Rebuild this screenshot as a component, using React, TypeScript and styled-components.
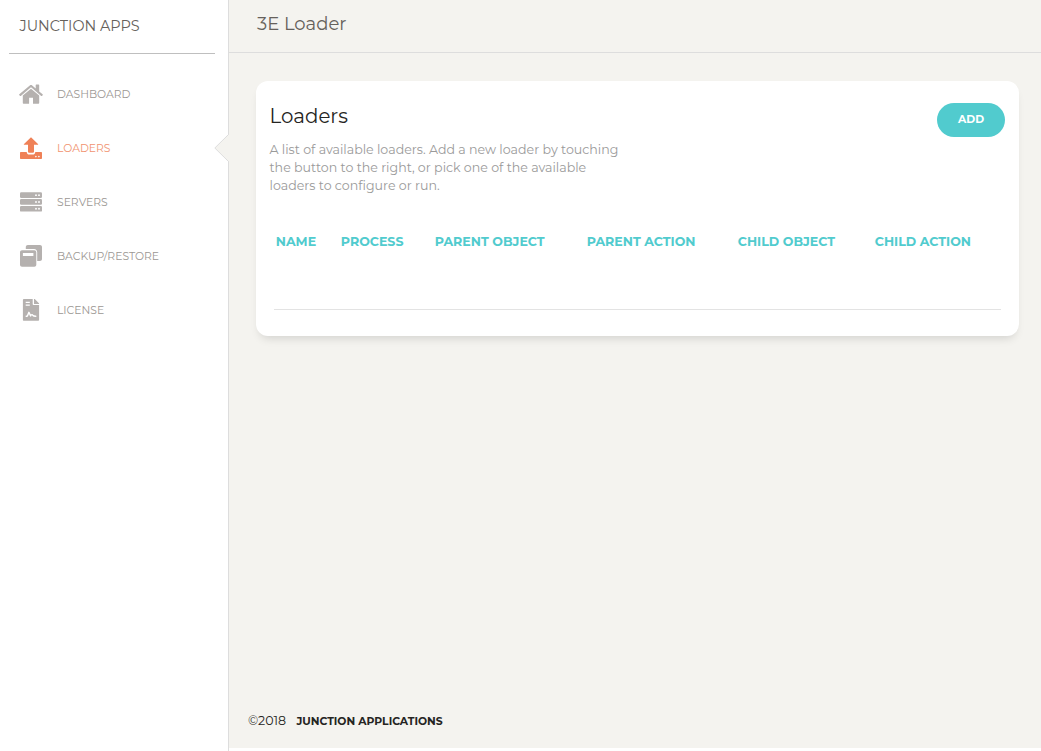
import React from "react";
import styled, { createGlobalStyle } from "styled-components";

const GlobalStyle = createGlobalStyle`
  *, *::before, *::after { box-sizing: border-box; }
  html, body { margin: 0; padding: 0; background: #fff; }
  body { font-family: Montserrat, Inter, "Open Sans", sans-serif; overflow: hidden; }
  h1, h2, p { margin: 0; font-weight: 400; }
`;

const Shell = styled.div`
  display: flex;
  height: 751px;
  width: 100%;
`;

const Sidebar = styled.aside`
  width: 229px;
  flex: none;
  background: #fff;
  border-right: 1px solid #dddddd;
`;

const Brand = styled.div`
  margin: 0 13px 0 9px;
  height: 54px;
  padding: 16px 0 0 10.5px;
  border-bottom: 1px solid #bfbfbf;
  color: #66615b;
  font-size: 14.4px;
  font-weight: 400;
  line-height: 20px;
  white-space: nowrap;
`;

const Nav = styled.nav`
  padding-top: 13px;
`;

const NavItem = styled.a<{ $active?: boolean }>`
  position: relative;
  display: flex;
  align-items: center;
  height: 54px;
  padding-left: 19px;
  color: ${(p) => (p.$active ? "#ef8157" : "#b5b1af")};
  svg { flex: none; display: block; }
`;

const NavLabel = styled.span<{ $active?: boolean }>`
  margin-left: 14px;
  padding-top: 1px;
  color: ${(p) => (p.$active ? "#f19370" : "#9b9793")};
  font-size: 10.8px;
  font-weight: 400;
  line-height: 30px;
`;

const Pointer = styled.svg`
  position: absolute;
  top: 13px;
  right: -1px;
`;

const Main = styled.main`
  flex: 1;
  height: 748px;
  display: flex;
  flex-direction: column;
  background: #f4f3ef;
`;

const TopBar = styled.header`
  height: 53px;
  padding: 9px 0 0 28px;
  border-bottom: 1px solid #dddddd;
`;

const PageTitle = styled.h1`
  color: #66615b;
  font-size: 18px;
  line-height: 30px;
`;

const Card = styled.section`
  margin: 28px 22px 0 27px;
  height: 255px;
  padding: 22px 14px 0 13.5px;
  background: #fff;
  border-radius: 12px;
  box-shadow: 0 6px 10px -4px rgba(0, 0, 0, 0.15);
`;

const CardHead = styled.div`
  display: flex;
  justify-content: space-between;
  align-items: flex-start;
  height: 123px;
`;

const CardTitle = styled.h2`
  color: #252422;
  font-size: 19.8px;
  line-height: 27px;
`;

const Summary = styled.p`
  margin-top: 11px;
  color: #9a9a9a;
  font-size: 12.6px;
  line-height: 18px;
`;

const SummaryLine = styled.span`
  display: block;
  white-space: nowrap;
`;

const AddButton = styled.button`
  width: 68px;
  height: 34px;
  padding: 0 0 1px;
  border: 0;
  border-radius: 17px;
  background: #51cbce;
  color: #fff;
  font-family: inherit;
  font-size: 10.8px;
  font-weight: 700;
  line-height: 33px;
`;

const TableHead = styled.div`
  display: grid;
  grid-template-columns: 65px 94px 152px 151px 137px 1fr;
  height: 84px;
  margin: 0 4px 0 4.5px;
  padding: 6px 0 0 1.8px;
  border-bottom: 1px solid #e3e3e3;
`;

const Column = styled.span`
  color: #51cbce;
  font-size: 12.6px;
  font-weight: 700;
  line-height: 19px;
  white-space: nowrap;
`;

const Footer = styled.footer`
  display: flex;
  align-items: center;
  margin-top: auto;
  height: 54px;
  padding-left: 19px;
  color: #252422;
`;

const Year = styled.span`
  width: 48.4px;
  padding-bottom: 1px;
  font-size: 12.6px;
  font-weight: 400;
`;

const Company = styled.span`
  font-size: 10.8px;
  font-weight: 700;
`;

const HomeIcon = () => (
  <svg width="24" height="24" viewBox="0 -0.6 24 24" fill="currentColor">
    <path d="M12 6.2 20.2 12.9V20.2c0 .6-.4 1-1 1H14v-6.1h-3.9v6.1H4.8c-.6 0-1-.4-1-1v-7.3z" />
    <path d="M.3 11.7 10.8 2.8c.7-.6 1.7-.6 2.4 0l3.5 3V2.4c0-.4.3-.6.6-.6h2.3c.4 0 .6.3.6.6v6.5l3.4 2.8c.3.2.3.6.1.9l-.6.6c-.2.3-.6.3-.9.1L12.4 5a.6.6 0 0 0-.8 0L1.8 13.3c-.3.2-.7.2-.9-.1l-.7-.7c-.2-.2-.2-.6.1-.8z" />
  </svg>
);

const LoaderIcon = () => (
  <svg width="24" height="24" viewBox="0 0 24 24" fill="currentColor">
    <path d="M12 1.2 19 8c.4.4.2.8-.3.8H15v6.6c0 .9-.6 1.4-1.4 1.4h-3.2c-.8 0-1.4-.5-1.4-1.4V8.8H5.3c-.5 0-.7-.4-.3-.8z" />
    <path
      fillRule="evenodd"
      d="M2 16h5.7c.1 1.6 1.1 2.6 2.7 2.6h3.2c1.6 0 2.6-1 2.7-2.6H22c.6 0 1 .4 1 1v5c0 .6-.4 1-1 1H2c-.6 0-1-.4-1-1v-5c0-.6.4-1 1-1zm14.9 3.8a.8.8 0 1 0 0 1.6.8.8 0 0 0 0-1.6zm3 0a.8.8 0 1 0 0 1.6.8.8 0 0 0 0-1.6z"
    />
  </svg>
);

const ServerIcon = () => (
  <svg width="24" height="24" viewBox="0 0 24 24">
    {[2.3, 9.1, 15.9].map((y) => (
      <g key={y}>
        <rect x="1" y={y} width="22" height="5.7" rx="1.2" fill="currentColor" />
        <circle cx="17" cy={y + 2.85} r="0.95" fill="#fff" />
        <circle cx="20" cy={y + 2.85} r="0.95" fill="#fff" />
      </g>
    ))}
  </svg>
);

const BackupIcon = () => (
  <svg width="24" height="24" viewBox="0 0 24 24" fill="currentColor">
    <path d="M8.8 1H21c1.1 0 2 .9 2 2v12.1c0 1.1-.9 2-2 2h-2.8V8.3c0-1.9-1.2-3.3-3.2-3.3H6.8V3c0-1.1.9-2 2-2z" />
    <path fillRule="evenodd" d="M3 6.3h12.3c1.1 0 2 .9 2 2V20.8c0 1.1-.9 2-2 2H3c-1.1 0-2-.9-2-2V8.3c0-1.1.9-2 2-2zm.9 2.8V12h10.5V9.1z" />
  </svg>
);

const LicenseIcon = () => (
  <svg width="24" height="24" viewBox="0 0 24 24">
    <path fill="currentColor" d="M4.8 1h8.9v5.1c0 .6.4 1 1 1h5.4v14.7c0 .6-.5 1-1 1H4.8c-.5 0-.9-.4-.9-1V2c0-.6.4-1 .9-1zM15 1h.3c.3 0 .5.1.7.3l3.7 3.6c.2.2.4.5.4.8V6H15z" />
    <path fill="none" stroke="#fff" strokeWidth="1.2" d="M6.7 4.3h4.1M6.7 7.2h4.1" />
    <path fill="none" stroke="#fff" strokeWidth="1.4" strokeLinecap="round" strokeLinejoin="round" d="M7.2 18.2h.6c.4 0 .6-.2.7-.5l1.4-3.4 1.7 3.6c.8-1.7 1.8-1.6 2.4-.4.4.6 1.1.7 2.8.7" />
  </svg>
);

const navItems = [
  { label: "DASHBOARD", Icon: HomeIcon },
  { label: "LOADERS", Icon: LoaderIcon, active: true },
  { label: "SERVERS", Icon: ServerIcon },
  { label: "BACKUP/RESTORE", Icon: BackupIcon },
  { label: "LICENSE", Icon: LicenseIcon },
];

const columns = ["NAME", "PROCESS", "PARENT OBJECT", "PARENT ACTION", "CHILD OBJECT", "CHILD ACTION"];

const summary = [
  "A list of available loaders. Add a new loader by touching",
  "the button to the right, or pick one of the available",
  "loaders to configure or run.",
];

export default function App() {
  return (
    <>
      <GlobalStyle />
      <Shell>
        <Sidebar>
          <Brand>JUNCTION APPS</Brand>
          <Nav>
            {navItems.map(({ label, Icon, active }) => (
              <NavItem key={label} $active={active}>
                <Icon />
                <NavLabel $active={active}>{label}</NavLabel>
                {active && (
                  <Pointer width="15" height="28" viewBox="0 0 15 28">
                    <path d="M15 0 14.5 .5.8 14l13.7 13.5.5.5z" fill="#f4f3ef" />
                    <path d="M14.5 0v.5L.8 14l13.7 13.5v.5" fill="none" stroke="#dddddd" />
                  </Pointer>
                )}
              </NavItem>
            ))}
          </Nav>
        </Sidebar>
        <Main>
          <TopBar>
            <PageTitle>3E Loader</PageTitle>
          </TopBar>
          <Card>
            <CardHead>
              <div>
                <CardTitle>Loaders</CardTitle>
                <Summary>
                  {summary.map((line) => (
                    <SummaryLine key={line}>{line}</SummaryLine>
                  ))}
                </Summary>
              </div>
              <AddButton>ADD</AddButton>
            </CardHead>
            <TableHead>
              {columns.map((label) => (
                <Column key={label}>{label}</Column>
              ))}
            </TableHead>
          </Card>
          <Footer>
            <Year>©2018</Year>
            <Company>JUNCTION APPLICATIONS</Company>
          </Footer>
        </Main>
      </Shell>
    </>
  );
}
